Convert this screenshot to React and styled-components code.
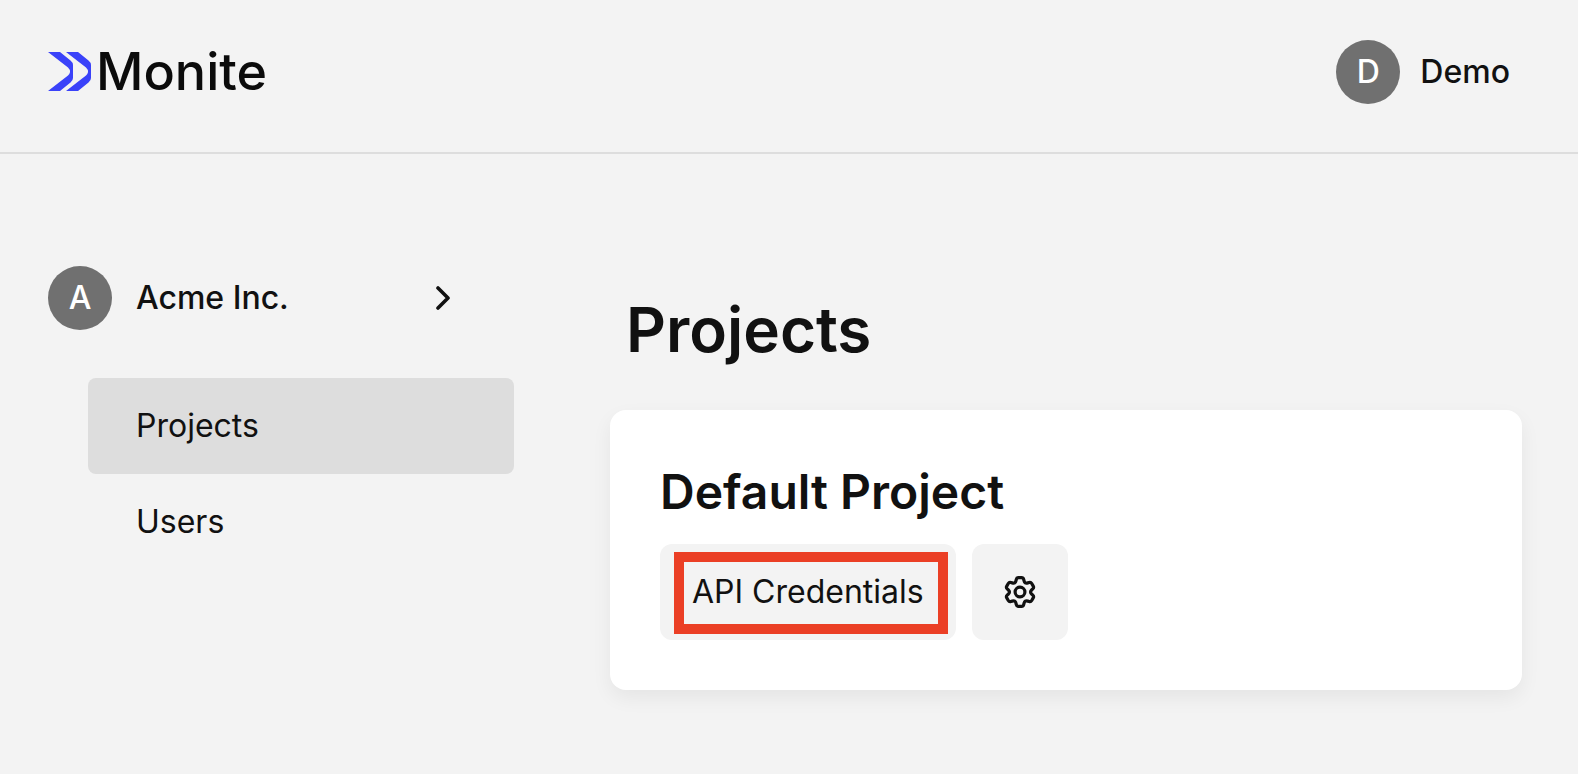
import React from "react";
import styled, { createGlobalStyle } from "styled-components";

const GlobalStyle = createGlobalStyle`
  *, *::before, *::after { box-sizing: border-box; }
  body {
    margin: 0;
    background: #f3f3f3;
    color: #111111;
    font-family: Inter, "Liberation Sans", sans-serif;
    font-size: 32px;
    line-height: 48px;
  }
  button { font: inherit; color: inherit; border: 0; cursor: pointer; }
  h1, h2 { margin: 0; }
`;

const Header = styled.header`
  display: flex;
  align-items: center;
  justify-content: space-between;
  padding: 40px 68px 48px 48px;
  border-bottom: 2px solid #dddddd;
`;

const Brand = styled.a`
  display: flex;
  align-items: center;
  gap: 4px;
  height: 64px;
  color: #0b0b0b;
  font-size: 52px;
  font-weight: 500;
  line-height: 64px;
  text-decoration: none;
`;

const AccountButton = styled.button`
  display: flex;
  align-items: center;
  gap: ${({ $gap }) => $gap}px;
  padding: 0;
  background: none;
  font-weight: 500;
`;

const Avatar = styled.span`
  display: flex;
  align-items: center;
  justify-content: center;
  width: 64px;
  height: 64px;
  border-radius: 50%;
  background: #707070;
  color: #ffffff;
`;

const Layout = styled.div`
  display: flex;
  align-items: flex-start;
  gap: 96px;
  padding: 112px 56px 84px 48px;
`;

const Sidebar = styled.aside`
  flex: 0 0 466px;
  display: flex;
  flex-direction: column;
  gap: 48px;
`;

const Organization = styled.div`
  display: flex;
  padding-right: 64px;

  & > button { flex: 1; }
  svg { margin-left: auto; }
`;

const Nav = styled.nav`
  display: flex;
  flex-direction: column;
  padding-left: 40px;
`;

const NavLink = styled.a`
  padding: 24px 48px;
  border-radius: 8px;
  background: ${({ $active }) => ($active ? "#dddddd" : "transparent")};
  color: inherit;
  text-decoration: none;
`;

const Content = styled.main`
  flex: 1;
  min-width: 0;
  padding-top: 24px;
`;

const PageTitle = styled.h1`
  padding: 0 16px 40px;
  font-size: 62px;
  font-weight: 600;
  line-height: 80px;
`;

const Card = styled.section`
  padding: 50px;
  border-radius: 16px;
  background: #ffffff;
  box-shadow: 0 8px 20px rgba(0, 0, 0, 0.06);
`;

const CardTitle = styled.h2`
  padding-bottom: 20px;
  font-size: 48px;
  font-weight: 600;
  line-height: 64px;
`;

const Actions = styled.div`
  display: flex;
  gap: 16px;
`;

const ActionButton = styled.button`
  position: relative;
  display: flex;
  align-items: center;
  justify-content: center;
  min-width: 96px;
  height: 96px;
  padding: 0 ${({ $icon }) => ($icon ? 0 : 32)}px;
  border-radius: 12px;
  background: #f3f3f3;
`;

const Highlight = styled.span`
  position: absolute;
  inset: 8px 8px 6px 14px;
  border: 10px solid #eb3f25;
  pointer-events: none;
`;

const Logo = () => (
  <svg width="44" height="40" viewBox="0 0 44 40" fill="#3a42f9" aria-hidden="true">
    <path d="M0 0H12L22.500 8.500Q25 10.500 25 13V26Q25 28.500 22.500 30.500L12 39H0L20 23.500Q24 19.500 20 15.500Z" />
    <path d="M18 0H30L40.500 8.500Q43 10.500 43 13V26Q43 28.500 40.500 30.500L30 39H18L38 23.500Q42 19.500 38 15.500Z" />
  </svg>
);

const ChevronRight = () => (
  <svg width="14" height="24" viewBox="0 0 14 24" fill="none" stroke="currentColor" strokeWidth="3.600" strokeLinecap="round" strokeLinejoin="round" aria-hidden="true">
    <path d="M2 2L12 12L2 22" />
  </svg>
);

// Outline of one gear tooth that points up, as [across, outward] from the centre.
const TOOTH = [[-4.4, 9.6], [-3.3, 14.4], [3.3, 14.4], [4.4, 9.6]];

const gearOutline = () => {
  const points = [0, 60, 120, 180, 240, 300].flatMap((degrees) => {
    const angle = (degrees * Math.PI) / 180;
    return TOOTH.map(([across, outward]) => [
      across * Math.cos(angle) + outward * Math.sin(angle),
      across * Math.sin(angle) - outward * Math.cos(angle),
    ]);
  });
  const cornerRadius = 1.8;
  const toward = ([x1, y1], [x2, y2]) => {
    const length = Math.hypot(x2 - x1, y2 - y1);
    const t = Math.min(0.5, cornerRadius / length);
    return `${(x1 + (x2 - x1) * t).toFixed(2)} ${(y1 + (y2 - y1) * t).toFixed(2)}`;
  };
  return points
    .map((point, i) => {
      const previous = points[(i + points.length - 1) % points.length];
      const next = points[(i + 1) % points.length];
      const corner = `${point[0].toFixed(2)} ${point[1].toFixed(2)}`;
      return `${i === 0 ? "M" : "L"}${toward(point, previous)}Q${corner} ${toward(point, next)}`;
    })
    .join("") + "Z";
};

const GEAR_PATH = gearOutline();

const Gear = () => (
  <svg width="32" height="32" viewBox="-16 -16 32 32" fill="none" stroke="currentColor" strokeWidth="3.200" strokeLinejoin="round" aria-hidden="true">
    <path d={GEAR_PATH} />
    <circle r="4.900" />
  </svg>
);

export default function App() {
  return (
    <>
      <GlobalStyle />
      <Header>
        <Brand href="#home">
          <Logo />
          Monite
        </Brand>
        <AccountButton type="button" $gap={20}>
          <Avatar>D</Avatar>
          Demo
        </AccountButton>
      </Header>
      <Layout>
        <Sidebar>
          <Organization>
            <AccountButton type="button" $gap={24}>
              <Avatar>A</Avatar>
              Acme Inc.
              <ChevronRight />
            </AccountButton>
          </Organization>
          <Nav>
            <NavLink href="#projects" aria-current="page" $active>
              Projects
            </NavLink>
            <NavLink href="#users">Users</NavLink>
          </Nav>
        </Sidebar>
        <Content>
          <PageTitle>Projects</PageTitle>
          <Card>
            <CardTitle>Default Project</CardTitle>
            <Actions>
              <ActionButton type="button">
                API Credentials
                <Highlight />
              </ActionButton>
              <ActionButton type="button" $icon aria-label="Project settings">
                <Gear />
              </ActionButton>
            </Actions>
          </Card>
        </Content>
      </Layout>
    </>
  );
}
